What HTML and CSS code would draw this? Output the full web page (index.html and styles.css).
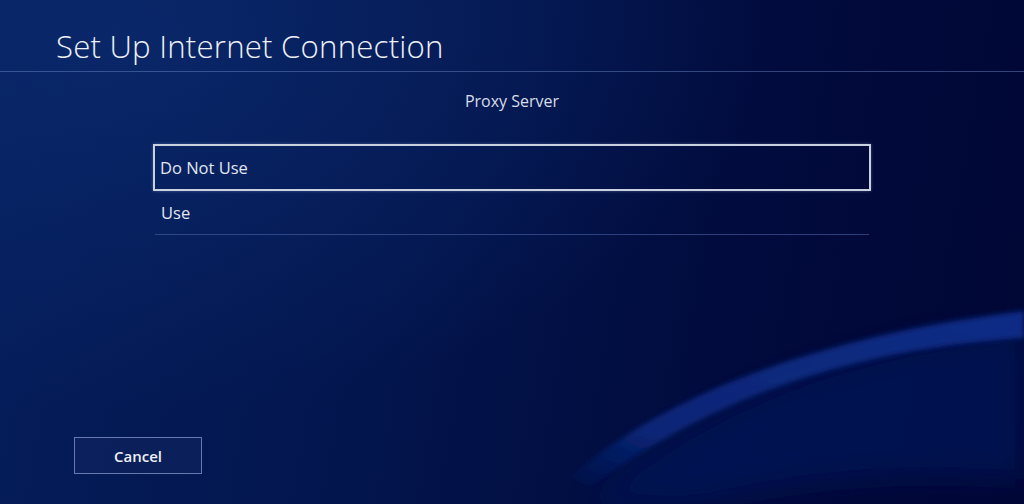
FILE: index.html
```html
<!DOCTYPE html>
<html>
<head>
<meta charset="utf-8">
<link rel="stylesheet" href="styles.css">
</head>
<body>
<svg class="wave" width="1024" height="504" viewBox="0 0 1024 504">
  <defs>
    <linearGradient id="band" x1="0" y1="1" x2="1" y2="0">
      <stop offset="0" stop-color="#0a2a7e" stop-opacity="0"/>
      <stop offset="0.25" stop-color="#0a2a80" stop-opacity="0.85"/>
      <stop offset="1" stop-color="#0a2c86"/>
    </linearGradient>
    <filter id="blur"><feGaussianBlur stdDeviation="2.5"/></filter>
    <filter id="blur2"><feGaussianBlur stdDeviation="14"/></filter>
  </defs>
  <path d="M590 504 C 680 420, 820 350, 1024 330 L1024 480 C 900 470, 800 480, 700 504 Z" fill="#03135a" opacity="0.7" filter="url(#blur2)"/>
  <path d="M570 478 C 650 405, 800 338, 1024 311 L1024 338 C 840 350, 700 405, 590 488 Z" fill="url(#band)" filter="url(#blur)"/>
</svg>
<div class="screen">
  <header class="header">
    <h1 class="title">Set Up Internet Connection</h1>
  </header>
  <main class="content">
    <div class="subtitle">Proxy Server</div>
    <ul class="options">
      <li class="option selected">Do Not Use</li>
      <li class="option">Use</li>
    </ul>
  </main>
  <footer class="footer">
    <button class="btn">Cancel</button>
  </footer>
</div>
</body>
</html>
```
FILE: styles.css
```css
html, body {
  margin: 0;
  padding: 0;
  width: 1024px;
  height: 504px;
  overflow: hidden;
}
body {
  position: relative;
  font-family: "Open Sans", "Liberation Sans", sans-serif;
  color: #e6eaf2;
  background:
    radial-gradient(ellipse 650px 380px at 120px 30px, rgba(12,44,112,0.7), rgba(12,44,112,0) 100%),
    linear-gradient(100deg, #051e5c 0%, #03154d 40%, #010b3d 70%, #000735 100%);
}
.wave {
  position: absolute;
  left: 0;
  top: 0;
  z-index: 0;
}
.screen {
  position: relative;
  z-index: 1;
  height: 504px;
  display: flex;
  flex-direction: column;
}
.header {
  height: 72px;
  border-bottom: 1px solid rgba(110,140,200,0.45);
  box-sizing: border-box;
  padding-left: 56px;
  display: flex;
  align-items: flex-end;
}
.title {
  margin: 0 0 3px 0;
  font-weight: 300;
  font-size: 31.2px;
  letter-spacing: 0.2px;
  color: #eef0f6;
  line-height: 44px;
}
.content {
  flex: 1;
  display: flex;
  flex-direction: column;
  align-items: center;
}
.subtitle {
  margin-top: 18px;
  font-size: 16px;
  font-weight: 400;
  color: #d8dde9;
  line-height: 22px;
}
.options {
  list-style: none;
  margin: 32px 0 0 0;
  padding: 0;
  width: 718px;
}
.option {
  height: 44px;
  line-height: 44px;
  padding-left: 6px;
  font-size: 16.5px;
  color: #e2e6ef;
  box-sizing: border-box;
  border-bottom: 1px solid rgba(80,105,175,0.55);
  margin: 0 2px;
}
.option.selected {
  height: 47px;
  line-height: 43px;
  margin: 0;
  padding-left: 5px;
  border: 2px solid #c9d0de;
  box-shadow: 0 0 3px rgba(180,200,240,0.35);
}
.footer {
  height: 67px;
  padding-left: 74px;
  box-sizing: border-box;
}
.btn {
  display: block;
  width: 128px;
  height: 37px;
  background: rgba(20,40,100,0.45);
  border: 1px solid rgba(140,160,210,0.7);
  color: #eef0f6;
  font-family: "Open Sans", "Liberation Sans", sans-serif;
  font-size: 15px;
  font-weight: 600;
  padding: 0;
  margin: 0;
}
```
